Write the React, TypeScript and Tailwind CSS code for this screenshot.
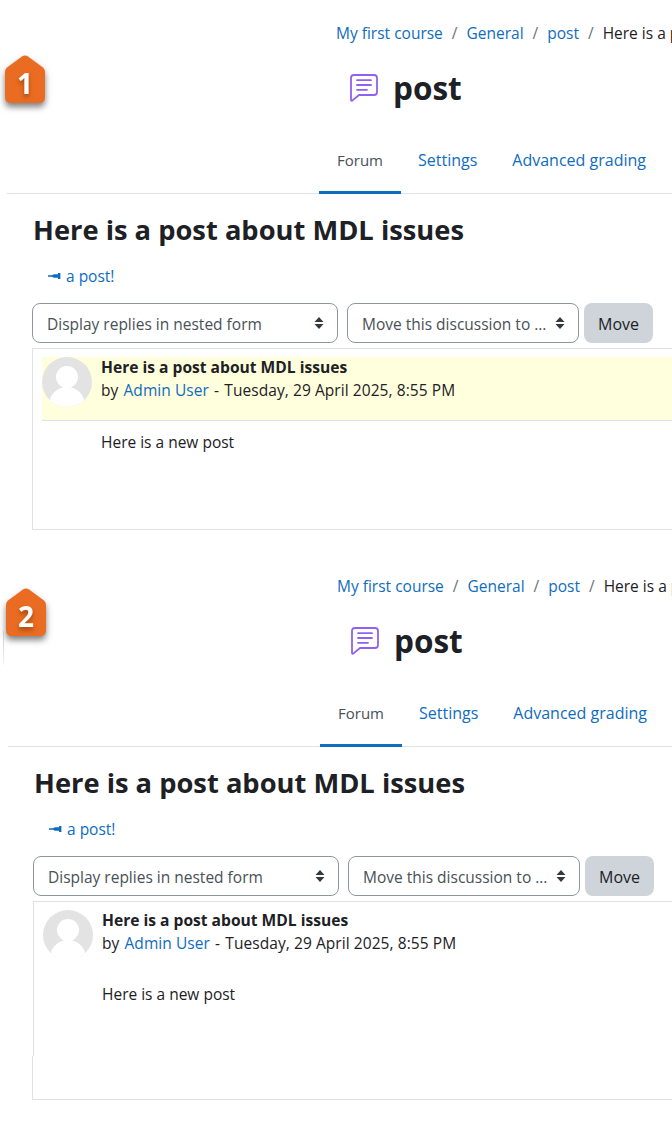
const font = "font-['Open_Sans','Liberation_Sans',sans-serif]";

function Badge({ n, second }: { n: string; second: boolean }) {
  return (
    <div className={`absolute left-[5px] w-[40px] h-[48px] drop-shadow-[0_4px_3px_rgba(0,0,0,0.5)] ${second ? "top-[35px]" : "top-[55px]"}`}>
      <svg viewBox="0 0 40 48" className="absolute inset-0 w-[40px] h-[48px]">
        <path d="M17 1.5Q20 -0.5 23 1.5L38 12.5Q40 14 40 17V42Q40 48 34 48H6Q0 48 0 42V17Q0 14 2 12.5Z" fill="#e96c22" />
      </svg>
      <div className="absolute inset-0 pt-[8px] flex items-center justify-center text-white font-bold text-[28px] leading-none [text-shadow:0_3px_4px_rgba(120,50,0,0.6)]">
        {n}
      </div>
    </div>
  );
}

function ForumIcon() {
  return (
    <svg viewBox="0 0 28 28" className="w-[28px] h-[28px]" fill="none" stroke="#9061f0" strokeWidth="1.8" strokeLinecap="round" strokeLinejoin="round">
      <path d="M4 1h20a3 3 0 0 1 3 3v14a3 3 0 0 1-3 3H9L2.2 26.6a.7.7 0 0 1-1.2-.5V4a3 3 0 0 1 3-3z" />
      <path d="M7 6.2h14M7 11h14M7 15.8h10" />
    </svg>
  );
}

function Pin() {
  return (
    <svg viewBox="0 0 13 8" className="w-[13px] h-[8px]" fill="#0f6cbf">
      <path d="M0 3.3H4L6 2.3H10V1H12.4V7H10V5.7H6L4 4.7H0z" />
    </svg>
  );
}

function Arrows() {
  return (
    <svg viewBox="0 0 10 14" className="w-[10px] h-[14px]" fill="#343a40">
      <path d="M5 1 9.5 6H.5zM5 13 .5 8h9z" />
    </svg>
  );
}

function Select({ label, w }: { label: string; w: string }) {
  return (
    <div className={`${w} h-[40px] shrink-0 rounded-[8px] border border-[#8f959e] flex items-center justify-between pl-[14px] pr-[13px] text-[#495057]`}>
      <span className="pt-px">{label}</span>
      <Arrows />
    </div>
  );
}

function Section({ n, highlighted }: { n: string; highlighted: boolean }) {
  return (
    <section className="relative h-[553px] text-[#1d2125]">
      <Badge n={n} second={!highlighted} />
      {!highlighted && (
        <div className="absolute left-[2px] top-[78px] w-px h-[34px] bg-gradient-to-b from-[#c8c8c8] to-[#f4f4f4]" />
      )}
      <div className="pt-[21px] pl-[336px] h-[64px] whitespace-nowrap flex text-[#0f6cbf]">
        <a>My first course</a>
        <span className="px-[9px] text-[#6a737b]">/</span>
        <a>General</a>
        <span className="px-[9px] text-[#6a737b]">/</span>
        <a>post</a>
        <span className="px-[9px] text-[#6a737b]">/</span>
        <span className="text-[#1d2125]">Here is a post about MDL issues</span>
      </div>
      <div className="h-[48px] pl-[350px] flex items-center gap-[15px]">
        <ForumIcon />
        <h1 className="text-[31.5px] font-bold leading-none">post</h1>
      </div>
      <div className="ml-[7px] mt-[14px] h-[68px] border-b border-[#dee2e6] pl-[312px] flex text-[16px]">
        <div className="w-[82px] h-[68px] pt-[2px] border-b-[3px] border-[#0f6cbf] flex items-center justify-center text-[15px] text-[#495057]">Forum</div>
        <div className="ml-[17px] pt-px flex items-center text-[#0f6cbf]">Settings</div>
        <div className="ml-[35px] pt-px flex items-center text-[#0f6cbf]">Advanced grading</div>
      </div>
      <h2 className="pl-[33px] mt-[16px] text-[27.3px] leading-[40px] font-bold">Here is a post about MDL issues</h2>
      <div className="pl-[48px] mt-[14px] h-[24px] flex items-center gap-[5px] text-[#0f6cbf]">
        <Pin />
        <a>a post!</a>
      </div>
      <div className="pl-[32px] mt-[15px] flex">
        <Select label="Display replies in nested form" w="w-[306px]" />
        <div className="ml-[9px]">
          <Select label="Move this discussion to ..." w="w-[232px]" />
        </div>
        <div className="ml-[5px] w-[69px] h-[40px] pt-px rounded-[8px] bg-[#ced4da] flex items-center justify-center text-[16px]">Move</div>
      </div>
      <div className={`relative ml-[32px] mt-[5px] border border-[#dee2e6] border-r-0 ${highlighted ? "h-[182px]" : "h-[199px]"} pl-[9px] pt-[8px]`}>
        {!highlighted && (
          <>
            <div className="absolute left-[-2px] top-[154px] bottom-[-1px] w-px bg-[#dee2e6]" />
            <div className="absolute left-[-1px] top-[154px] bottom-0 w-px bg-white" />
          </>
        )}
        <div className={`relative pl-[59px] ${highlighted ? "h-[64px] bg-[#ffffdd] border-b border-[#dee2e6]" : "h-[63px]"}`}>
          <div className={`absolute left-0 top-0 w-[50px] overflow-hidden ${highlighted ? "h-[50px]" : "h-[48px]"}`}>
            <div className="relative w-[50px] h-[50px] rounded-full bg-[#e3e3e3] overflow-hidden">
              <div className="absolute left-[14px] top-[9px] w-[22px] h-[22px] rounded-full bg-white" />
              <div className="absolute left-[7px] top-[30px] w-[36px] h-[36px] rounded-full bg-white" />
            </div>
          </div>
          <div className="relative -top-px">
            <div className="font-bold leading-[22px] text-[15.6px]">Here is a post about MDL issues</div>
            <div className="leading-[24px] whitespace-nowrap tracking-[0.07px]">
              by <a className="ml-px text-[#0f6cbf]">Admin User</a><span className="px-[1px]"> - </span>Tuesday, 29 April 2025, 8:55 PM
            </div>
          </div>
        </div>
        <div className="pl-[59px] leading-[24px] pt-[9px]">Here is a new post</div>
      </div>
    </section>
  );
}

export default function App() {
  return (
    <div className={`${font} w-[672px] h-[1123px] overflow-hidden bg-white text-[15.5px] leading-[24px]`}>
      <Section n="1" highlighted />
      <div className="ml-[1px]">
        <Section n="2" highlighted={false} />
      </div>
    </div>
  );
}
